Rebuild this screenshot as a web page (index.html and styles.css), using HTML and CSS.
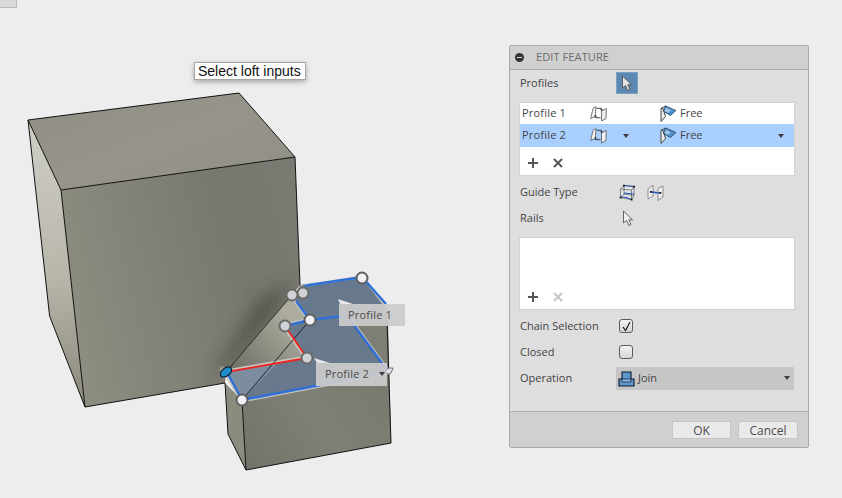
FILE: index.html
```html
<!DOCTYPE html>
<html lang="en">
<head>
<meta charset="utf-8">
<title>Edit Feature</title>
<link rel="stylesheet" href="styles.css">
</head>
<body>
<svg class="defs" width="0" height="0" aria-hidden="true">
  <defs>
    <symbol id="i-twist" viewBox="0 0 17 17">
      <path d="M.7 13.500 3 3.500 6 1.500 5.200 11.500z" fill="#f6f6f6" stroke="#666" stroke-width=".9"/>
      <path d="M11.500 6 16.300 3.500 16 13.500 11.500 16z" fill="#eeeeee" stroke="#666" stroke-width=".9"/>
      <path d="M6.500 3.300H11.500V5.500M10.300 4.500 11.500 5.800 12.700 4.500M10.500 12.700H5.500V10.500M6.700 11.500 5.500 10.200 4.300 11.500" fill="none" stroke="#333" stroke-width=".9"/>
    </symbol>
    <symbol id="i-free" viewBox="0 0 17 17">
      <path d="M1 3.500V16.500L5.500 11.500 3 3.500z" fill="#ececec" stroke="#444" stroke-width="1"/>
      <path d="M1 3.500 6 .8" fill="none" stroke="#444" stroke-width="1"/>
      <path d="M5.500 1 16 5.500 10.500 10.500 3.500 6.500z" fill="#4f90c9" stroke="#23456b" stroke-width=".8"/>
      <path d="M6 3 11 5.200 8 7.800 4.500 6z" fill="#a4c8e6"/>
    </symbol>
    <symbol id="i-arrow" viewBox="0 0 12 17">
      <path d="M1.500 1V13L4.500 10.500 6.800 15.500 9 14.500 6.800 9.800H10.500z" fill="currentColor" stroke="#555" stroke-width=".9"/>
    </symbol>
  </defs>
</svg>

<div class="stub"></div>

<svg class="scene" width="842" height="498" viewBox="0 0 842 498" aria-hidden="true">
  <defs>
    <linearGradient id="g-top" x1="0" y1="0" x2="1" y2="1">
      <stop offset="0" stop-color="#8f8e84"/><stop offset=".5" stop-color="#97958b"/><stop offset="1" stop-color="#8f8e85"/>
    </linearGradient>
    <linearGradient id="g-front" x1="61" y1="300" x2="300" y2="240" gradientUnits="userSpaceOnUse">
      <stop offset="0" stop-color="#8e8d81"/><stop offset=".3" stop-color="#85847a"/><stop offset=".75" stop-color="#77776f"/><stop offset="1" stop-color="#7a7a72"/>
    </linearGradient>
    <linearGradient id="g-left" x1="30" y1="150" x2="70" y2="400" gradientUnits="userSpaceOnUse">
      <stop offset="0" stop-color="#cbcac3"/><stop offset=".5" stop-color="#b9b7ab"/><stop offset="1" stop-color="#8d8b7e"/>
    </linearGradient>
    <linearGradient id="g-tube" x1="232" y1="372" x2="292" y2="318" gradientUnits="userSpaceOnUse">
      <stop offset="0" stop-color="#6e6e66"/><stop offset=".5" stop-color="#8d8c81"/><stop offset="1" stop-color="#adac9f"/>
    </linearGradient>
    <linearGradient id="g-box" x1="246" y1="470" x2="391" y2="380" gradientUnits="userSpaceOnUse">
      <stop offset="0" stop-color="#74736a"/><stop offset=".5" stop-color="#807f75"/><stop offset="1" stop-color="#7a796f"/>
    </linearGradient>
    <filter id="f-blur" x="-50%" y="-50%" width="200%" height="200%"><feGaussianBlur stdDeviation="9"/></filter>
    <filter id="f-glow" x="-100%" y="-100%" width="300%" height="300%"><feGaussianBlur stdDeviation="1.500"/></filter>
    <clipPath id="c-front"><path d="M61 190 295 157 300 285 292 295 226 372 225 383 85 407z"/></clipPath>
  </defs>

  <!-- large block -->
  <path d="M28 120 61 190 85 407 49.600 316z" fill="url(#g-left)"/>
  <path d="M61 190 295 157 300 285 292 295 226 372 225 383 85 407z" fill="url(#g-front)"/>
  <g clip-path="url(#c-front)">
    <path d="M296 280 226 370 214 376 262 300z" fill="#3d3d39" opacity=".8" filter="url(#f-blur)"/>
  </g>
  <path d="M28 120 239 93 295 157 61 190z" fill="url(#g-top)"/>
  <path d="M28 120 239 93 295 157 300 285M28 120 61 190 85 407 49.600 316 28 120M61 190 295 157M85 407 225 383" fill="none" stroke="#111" stroke-width="1"/>

  <!-- lower block -->
  <path d="M225 383 242 400 246 470 228 434z" fill="#8c8b7f"/>
  <path d="M242 400 388 320 391 443 246 470z" fill="url(#g-box)"/>
  <path d="M300 285 362 278 387 312 389 380 242 400z" fill="#7f7e74"/>
  <path d="M225 383 228 434 246 470 391 443 387 320M242 400 246 470" fill="none" stroke="#111" stroke-width="1"/>

  <!-- tube surface -->
  <path d="M292 295 310 320 285 326 307 358 226 372z" fill="url(#g-tube)"/>

  <!-- edge halos, drawn under the faces so only the outer side shows -->
  <path d="M303 287 362 278 387 310M292 295 310 320 285 326 307 358 226 372 242 400 388 372 347 316" fill="none" stroke="#c6c5be" stroke-width="5" stroke-linejoin="round"/>
  <path d="M222 368 226 377" fill="none" stroke="#fff" stroke-width="3" filter="url(#f-glow)"/>

  <!-- profile faces -->
  <path d="M303 287 362 278 387 310 347 316 388 372 242 400 226 372 307 358 285 326 310 320 292 295z" fill="#68798d"/>
  <path d="M226 372 278 363 242 400z" fill="#7d8da0"/>

  <!-- model lines over faces -->
  <path d="M292 295 226 372M310 320 242 400" fill="none" stroke="#1a1a1a" stroke-width=".9"/>

  <!-- profile edges -->
  <path d="M303 286 362 277 386 304M310 320 347 315.500 387 370M296 301 310 320 285 326M228 374 242 400 388 372" fill="none" stroke="#2f6fd8" stroke-width="2.400"/>
  <path d="M226 372 307 358 285 326" fill="none" stroke="#f3211f" stroke-width="1.800"/>

  <!-- handles -->
  <g class="handle-light">
    <circle cx="362" cy="278" r="5.500"/>
    <circle cx="310" cy="320" r="5.500"/>
    <circle cx="242" cy="400" r="5.500"/>
  </g>
  <g class="handle-dim">
    <circle cx="303" cy="293" r="5.500"/>
    <circle cx="292" cy="295" r="5.500"/>
    <circle cx="285" cy="326" r="5.500"/>
    <circle cx="307" cy="358" r="5.500"/>
  </g>
  <path d="M299 288A7 7 0 0 1 306 285" fill="none" stroke="#999" stroke-width="1"/>
  <ellipse cx="226" cy="372" rx="6.500" ry="4" transform="rotate(-40 226 372)" fill="#1c8fc9" stroke="#123" stroke-width="1.200"/>
  <path d="M385 372a4 4 0 0 0 6 1l2-5-5 0z" fill="#dfe3e8" stroke="#555" stroke-width=".8"/>

  <!-- callout tips -->
  <path d="M338 299 353 304H340z" fill="#e6e6e6"/>
  <path d="M314 358 330 363H317z" fill="#e6e6e6"/>
</svg>

<div class="tip">Select loft inputs</div>
<div class="callout callout-one">Profile 1</div>
<div class="callout callout-two">Profile 2<span class="caret caret-callout"></span></div>

<section class="panel">
  <header class="panel-head">
    <span class="minus"></span>
    <span class="head-text">EDIT FEATURE</span>
  </header>

  <div class="panel-body">
    <div class="row row-profiles">
      <span class="label">Profiles</span>
      <span class="select-btn"><svg class="arrow arrow-filled" width="12" height="17"><use href="#i-arrow"/></svg></span>
    </div>

    <div class="table table-profiles">
      <div class="trow">
        <span class="c-name">Profile 1</span>
        <svg class="ico" width="17" height="17"><use href="#i-twist"/></svg>
        <span class="c-gap"></span>
        <svg class="ico" width="17" height="17"><use href="#i-free"/></svg>
        <span class="c-val">Free</span>
      </div>
      <div class="trow trow-on">
        <span class="c-name">Profile 2</span>
        <svg class="ico" width="17" height="17"><use href="#i-twist"/></svg>
        <span class="c-gap"><span class="caret"></span></span>
        <svg class="ico" width="17" height="17"><use href="#i-free"/></svg>
        <span class="c-val">Free</span>
        <span class="caret caret-end"></span>
      </div>
      <div class="tools tools-filled">
        <svg width="12" height="12" viewBox="0 0 12 12"><path d="M6 1V11M1 6H11" stroke="#555" stroke-width="2"/></svg>
        <svg width="12" height="12" viewBox="0 0 12 12"><path d="M2 2 10 10M10 2 2 10" stroke="#555" stroke-width="2"/></svg>
      </div>
    </div>

    <div class="row row-guide">
      <span class="label">Guide Type</span>
      <span class="guide-icons">
        <svg width="17" height="17" viewBox="0 0 17 17">
          <path d="M5 1.500 15 2.500V11.500L12.500 15.500 1.500 13.500V5zM5 1.500V10M5 10 1.500 13.500M5 10 15 11.500M1.500 5 12.500 6V15.500M12.500 6 15 2.500" fill="#e4e6ea" stroke="#666" stroke-width=".8"/>
          <path d="M5 1.500 15 2.500M1.500 13.500C5 12 9 14 12.500 15.500M5 9 15 10" fill="none" stroke="#2456b8" stroke-width="1.100"/>
          <path d="M4 .7h1.800v1.800H4zM.7 12.700h1.800v1.800H.7zM11.700 14.700h1.800v1.800h-1.800zM14.200 1.700h1.800v1.800h-1.800z" fill="#111"/>
        </svg>
        <svg width="17" height="17" viewBox="0 0 17 17">
          <path d="M1 5 6 1V12L1 15zM11 4.500 16 2V13L11 16.500z" fill="#eee" stroke="#777" stroke-width=".8"/>
          <path d="M4 8 13 9" stroke="#2456b8" stroke-width="1.300"/>
          <path d="M3 7h1.800v1.800H3zM12.500 8h1.800v1.800h-1.800z" fill="#111"/>
        </svg>
      </span>
    </div>

    <div class="row row-rails">
      <span class="label">Rails</span>
      <svg class="arrow arrow-open" width="12" height="17"><use href="#i-arrow"/></svg>
    </div>

    <div class="table table-rails">
      <div class="tools tools-end">
        <svg width="12" height="12" viewBox="0 0 12 12"><path d="M6 1V11M1 6H11" stroke="#555" stroke-width="2"/></svg>
        <svg width="12" height="12" viewBox="0 0 12 12"><path d="M2 2 10 10M10 2 2 10" stroke="#c4c4c4" stroke-width="2"/></svg>
      </div>
    </div>

    <div class="row row-check row-first">
      <span class="label">Chain Selection</span>
      <span class="check"><svg width="11" height="11" viewBox="0 0 11 11"><path d="M2 6 4.500 9.500 9 1" fill="none" stroke="#222" stroke-width="1.200"/></svg></span>
    </div>
    <div class="row row-check">
      <span class="label">Closed</span>
      <span class="check"></span>
    </div>
    <div class="row row-op">
      <span class="label">Operation</span>
      <div class="dropdown">
        <svg width="17" height="17" viewBox="0 0 17 17">
          <path d="M1 16V9H4V2H13V9H16V16z" fill="#5d97cd" stroke="#0d1a2c" stroke-width="1.100"/>
          <path d="M4 9H13V12H4z" fill="#8ab6dd" stroke="#0d1a2c" stroke-width=".7"/>
        </svg>
        <span class="dd-text">Join</span>
        <span class="caret caret-dd"></span>
      </div>
    </div>
  </div>

  <footer class="panel-foot">
    <button class="btn btn-ok" type="button">OK</button>
    <button class="btn btn-cancel" type="button">Cancel</button>
  </footer>
</section>
</body>
</html>
```
FILE: styles.css
```css
* { box-sizing: border-box; }
html, body { margin: 0; height: 100%; }
body {
  background: #ededed;
  width: 842px;
  height: 498px;
  overflow: hidden;
  position: relative;
  font-family: "Open Sans", "Noto Sans", sans-serif;
  font-size: 11px;
  color: #444;
}
.defs { position: absolute; }
.stub {
  position: absolute; left: 0; top: 0; width: 17px; height: 8px;
  background: #d9d9d9; border: 1px solid #b9b9b9; border-top: 0; border-left: 0;
}
.scene { position: absolute; left: 0; top: 0; }
.handle-light circle { fill: #eef0f3; stroke: #5f5f5d; stroke-width: 2; }
.handle-dim circle { fill: #cfd2d6; stroke: #6a6a68; stroke-width: 2; }

.tip {
  position: absolute; left: 194px; top: 62px; width: 112px; height: 18px;
  display: flex; align-items: center; padding-left: 3px;
  background: #fdfdfd; border: 1px solid #a5a5a5;
  box-shadow: 0 2px 5px rgba(0,0,0,.3);
  font-family: "Liberation Sans", Arial, sans-serif;
  font-size: 14px;
  color: #111;
  white-space: nowrap;
}
.callout {
  position: absolute; display: flex; align-items: center;
  background: rgba(203,203,203,.93); color: #4a4a4a; padding-left: 9px;
  letter-spacing: .2px;
}
.callout-one { left: 339px; top: 304px; width: 66px; height: 22px; padding-bottom: 2px; }
.callout-two { left: 316px; top: 363px; width: 71px; height: 23px; padding-bottom: 2px; }
.caret {
  display: inline-block; width: 0; height: 0;
  border-left: 3.500px solid transparent; border-right: 3.500px solid transparent;
  border-top: 4px solid #3c3c3c;
}
.caret-callout { margin-left: 10px; }

.panel {
  position: absolute; left: 509px; top: 45px; width: 300px; height: 403px;
  display: flex; flex-direction: column;
  background: #dedede; border: 1px solid #a9a9a9; border-radius: 2px;
}
.panel-head {
  height: 24px; flex: none; display: flex; align-items: center; gap: 12px;
  padding-left: 5px; background: #d0d0d0; border-bottom: 1px solid #adadad;
  color: #6b6b6b; font-size: 11px; letter-spacing: .1px;
}
.head-text { padding-bottom: 2px; }
.minus {
  width: 9px; height: 9px; border-radius: 50%; background: #333; position: relative; flex: none;
}
.minus::after {
  content: ""; position: absolute; left: 2px; right: 2px; top: 4px; height: 1px; background: #ddd;
}
.panel-body { flex: 1; padding: 2px 13px 0 9px; }
.row { display: flex; align-items: center; height: 26px; }
.label { width: 97px; flex: none; padding: 0 0 2px 1px; }
.row-profiles { height: 22px; }
.select-btn {
  width: 22px; height: 22px; background: #5c88b1; border: 1px solid #7ba0c3;
  display: flex; align-items: center; justify-content: center;
}
.arrow-filled { color: #e4e4e4; }
.arrow-open { color: #efefef; margin-left: 6px; }

.table { background: #fff; border: 1px solid #d2d2d2; display: flex; flex-direction: column; width: 276px; }
.table-profiles { height: 74px; margin-top: 8px; }
.table-rails { height: 73px; margin-top: 6px; justify-content: flex-end; }
.trow { height: 21px; flex: none; display: flex; align-items: center; padding-left: 2px; position: relative; }
.trow-on { background: #a9cfff; width: 274px; height: 23px; }
.c-name { width: 68px; flex: none; letter-spacing: .2px; padding-bottom: 2px; }
.c-gap { width: 53px; flex: none; padding-left: 16px; display: flex; align-items: center; }
.c-val { margin-left: 3px; padding-bottom: 2px; }
.ico { flex: none; }
.caret-end { position: absolute; right: 10px; top: 50%; margin-top: -2px; }
.caret-dd { position: absolute; right: 4px; top: 50%; margin-top: -2px; }
.tools { display: flex; align-items: center; gap: 13px; padding-left: 7px; }
.tools-filled { height: 28px; padding-top: 4px; }
.tools-end { height: 24px; }

.row-guide { margin-top: 3px; }
.guide-icons { display: flex; gap: 11px; padding-left: 3px; }
.row-first { margin-top: 3px; }
.check {
  width: 14px; height: 14px; margin-left: 3px; border: 1px solid #5c5c5c; border-radius: 3px;
  background: linear-gradient(#f4f4f4, #d4d4d4);
  display: flex; align-items: center; justify-content: center;
}
.dropdown {
  width: 178px; height: 23px; background: #c6c6c6; position: relative;
  display: flex; align-items: center; padding-left: 2px;
}
.dd-text { margin-left: 3px; padding-bottom: 2px; }

.panel-foot {
  height: 36px; flex: none; display: flex; align-items: center; justify-content: flex-end; gap: 7px;
  padding: 0 10px 0 0; background: #d0d0d0; border-top: 1px solid #adadad;
}
.btn {
  height: 18px; padding: 0; background: #e9e9e9; border: 1px solid #c4c4c4;
  font: 12px "Open Sans", "Noto Sans", sans-serif; color: #4a4a4a;
}
.btn-ok { width: 59px; }
.btn-cancel { width: 60px; }
```
